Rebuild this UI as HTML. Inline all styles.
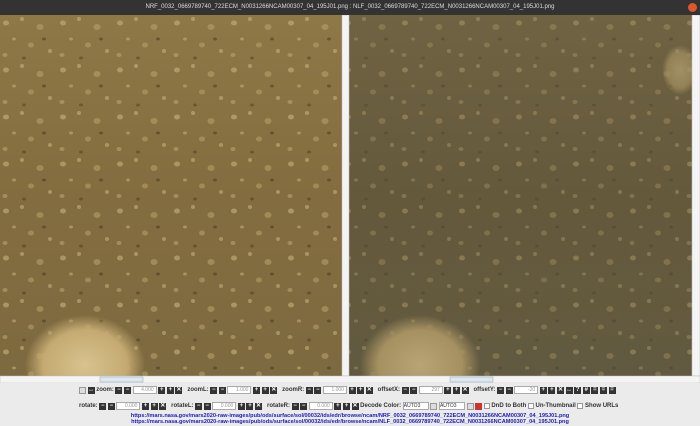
<!DOCTYPE html>
<html><head><style>
body{margin:0;width:700px;height:426px;overflow:hidden;background:#ebebeb;font-family:"Liberation Sans",sans-serif;position:relative}
.t{position:absolute;left:0;top:0;width:700px;height:15px;background:#333;color:#ddd;font-size:6px;text-align:center;line-height:15px}
.a{position:absolute}
.row{position:absolute;font-size:6px;font-weight:bold;color:#333;white-space:nowrap;display:flex;align-items:center;gap:1.6px}
.b{display:inline-block;width:7px;height:7px;background:#333;color:#fff;font-size:6px;line-height:7px;text-align:center}
.bl{display:inline-block;width:7px;height:7px;border:1px solid #999;background:#ddd;box-sizing:border-box}
.in{display:inline-block;width:24px;height:8px;border:1px solid #aaa;background:#fff;color:#999;font-weight:normal;font-size:5px;line-height:7px;text-align:right;padding-right:2px;box-sizing:border-box}
.u{position:absolute;left:0;width:700px;text-align:center;font-size:5.6px;font-weight:bold;color:#1a1ab8}
.ck{display:inline-block;width:6px;height:6px;border:1px solid #999;background:#fff;box-sizing:border-box}
</style></head><body>
<div class="t">NRF_0032_0669789740_722ECM_N0031266NCAM00307_04_195J01.png : NLF_0032_0669789740_722ECM_N0031266NCAM00307_04_195J01.png<span style="position:absolute;right:3px;top:3px;width:9px;height:9px;border-radius:50%;background:#e0552c"></span></div>
<svg class="a" style="left:0;top:15px" width="700" height="368">
<defs>
<pattern id="p" width="57" height="47" patternUnits="userSpaceOnUse">
<ellipse cx="6" cy="8" rx="3" ry="2.5" fill="#c9b07a" opacity=".6"/>
<ellipse cx="22" cy="4" rx="2" ry="2" fill="#d4bc86" opacity=".5"/>
<ellipse cx="40" cy="12" rx="3.5" ry="3" fill="#c2a870" opacity=".5"/>
<ellipse cx="14" cy="24" rx="2" ry="1.5" fill="#cfb580" opacity=".5"/>
<ellipse cx="31" cy="30" rx="3" ry="2.5" fill="#bfa66f" opacity=".5"/>
<ellipse cx="50" cy="36" rx="2" ry="2" fill="#d0b984" opacity=".5"/>
<ellipse cx="5" cy="40" rx="2.5" ry="2" fill="#c6ad76" opacity=".5"/>
<ellipse cx="44" cy="24" rx="2" ry="1.5" fill="#3a2f1c" opacity=".45"/>
<ellipse cx="24" cy="43" rx="2" ry="1.5" fill="#3a2f1c" opacity=".4"/>
</pattern>
<radialGradient id="r1"><stop offset="0" stop-color="#d8c28e"/><stop offset=".7" stop-color="#c4aa72"/><stop offset="1" stop-color="#c4aa72" stop-opacity="0"/></radialGradient>
<radialGradient id="r2"><stop offset="0" stop-color="#b8a474"/><stop offset=".7" stop-color="#a49060"/><stop offset="1" stop-color="#a49060" stop-opacity="0"/></radialGradient>
<linearGradient id="g1" x1="0" y1="0" x2="0" y2="1"><stop offset="0" stop-color="#8e7847"/><stop offset=".5" stop-color="#836d40"/><stop offset="1" stop-color="#7e6a40"/></linearGradient>
<linearGradient id="g2" x1="0" y1="0" x2="0" y2="1"><stop offset="0" stop-color="#6f6343"/><stop offset=".5" stop-color="#65593c"/><stop offset="1" stop-color="#625a40"/></linearGradient>
</defs>
<rect x="0" y="0" width="342" height="361" fill="url(#g1)"/>
<rect x="0" y="0" width="342" height="361" fill="url(#p)"/>
<ellipse cx="85" cy="350" rx="60" ry="50" fill="url(#r1)"/>
<rect x="349" y="0" width="343" height="361" fill="url(#g2)"/>
<rect x="349" y="0" width="343" height="361" fill="url(#p)" opacity=".6"/>
<ellipse cx="420" cy="350" rx="60" ry="50" fill="url(#r2)"/>
<ellipse cx="680" cy="55" rx="18" ry="25" fill="url(#r2)" opacity=".7"/>
<rect x="342" y="0" width="7" height="361" fill="#f4f4f4" stroke="#bbb" stroke-width=".5"/>
<rect x="692" y="0" width="8" height="361" fill="#f4f4f4" stroke="#bbb" stroke-width=".5"/>
<rect x="0" y="361" width="700" height="7" fill="#f4f4f4" stroke="#bbb" stroke-width=".5"/>
<rect x="100" y="362" width="43" height="5" fill="#dde6f3" stroke="#8aa" stroke-width=".5"/>
<rect x="450" y="362" width="43" height="5" fill="#dde6f3" stroke="#8aa" stroke-width=".5"/>
</svg>
<div class="row" style="left:79px;top:386px"><span class="bl"></span><span class="b">↔</span> zoom: <span class="b">−</span><span class="b">−</span><span class="in">4.000</span><span class="b">+</span><span class="b">+</span><span class="b">✕</span>&nbsp; zoomL: <span class="b">−</span><span class="b">−</span><span class="in">1.000</span><span class="b">+</span><span class="b">+</span><span class="b">✕</span>&nbsp; zoomR: <span class="b">−</span><span class="b">−</span><span class="in">1.000</span><span class="b">+</span><span class="b">+</span><span class="b">✕</span>&nbsp; offsetX: <span class="b">−</span><span class="b">−</span><span class="in">297</span><span class="b">+</span><span class="b">+</span><span class="b">✕</span>&nbsp; offsetY: <span class="b">−</span><span class="b">−</span><span class="in">-20</span><span class="b">+</span><span class="b">+</span><span class="b">✕</span><span class="b">↔</span><span class="b">?</span><span class="b">#</span><span class="b">=</span><span class="b">=</span><span class="b">=</span></div>
<div class="row" style="left:79px;top:402px">rotate: <span class="b">−</span><span class="b">−</span><span class="in">0.000</span><span class="b">+</span><span class="b">+</span><span class="b">✕</span>&nbsp; rotateL: <span class="b">−</span><span class="b">−</span><span class="in">0.000</span><span class="b">+</span><span class="b">+</span><span class="b">✕</span>&nbsp; rotateR: <span class="b">−</span><span class="b">−</span><span class="in">0.000</span><span class="b">+</span><span class="b">+</span><span class="b">✕</span> Decode Color: <span class="in" style="width:26px;text-align:left;color:#333">AUTO3</span><span class="bl"></span><span class="in" style="width:26px;text-align:left;color:#333">AUTO3</span><span class="bl"></span><span class="b" style="background:#c33"></span><span class="ck"></span>DnD to Both <span class="ck"></span>Un-Thumbnail <span class="ck"></span>Show URLs</div>
<div class="u" style="top:413px">https://mars.nasa.gov/mars2020-raw-images/pub/ods/surface/sol/00032/ids/edr/browse/ncam/NRF_0032_0669789740_722ECM_N0031266NCAM00307_04_195J01.png</div>
<div class="u" style="top:419px">https://mars.nasa.gov/mars2020-raw-images/pub/ods/surface/sol/00032/ids/edr/browse/ncam/NLF_0032_0669789740_722ECM_N0031266NCAM00307_04_195J01.png</div>
</body></html>
